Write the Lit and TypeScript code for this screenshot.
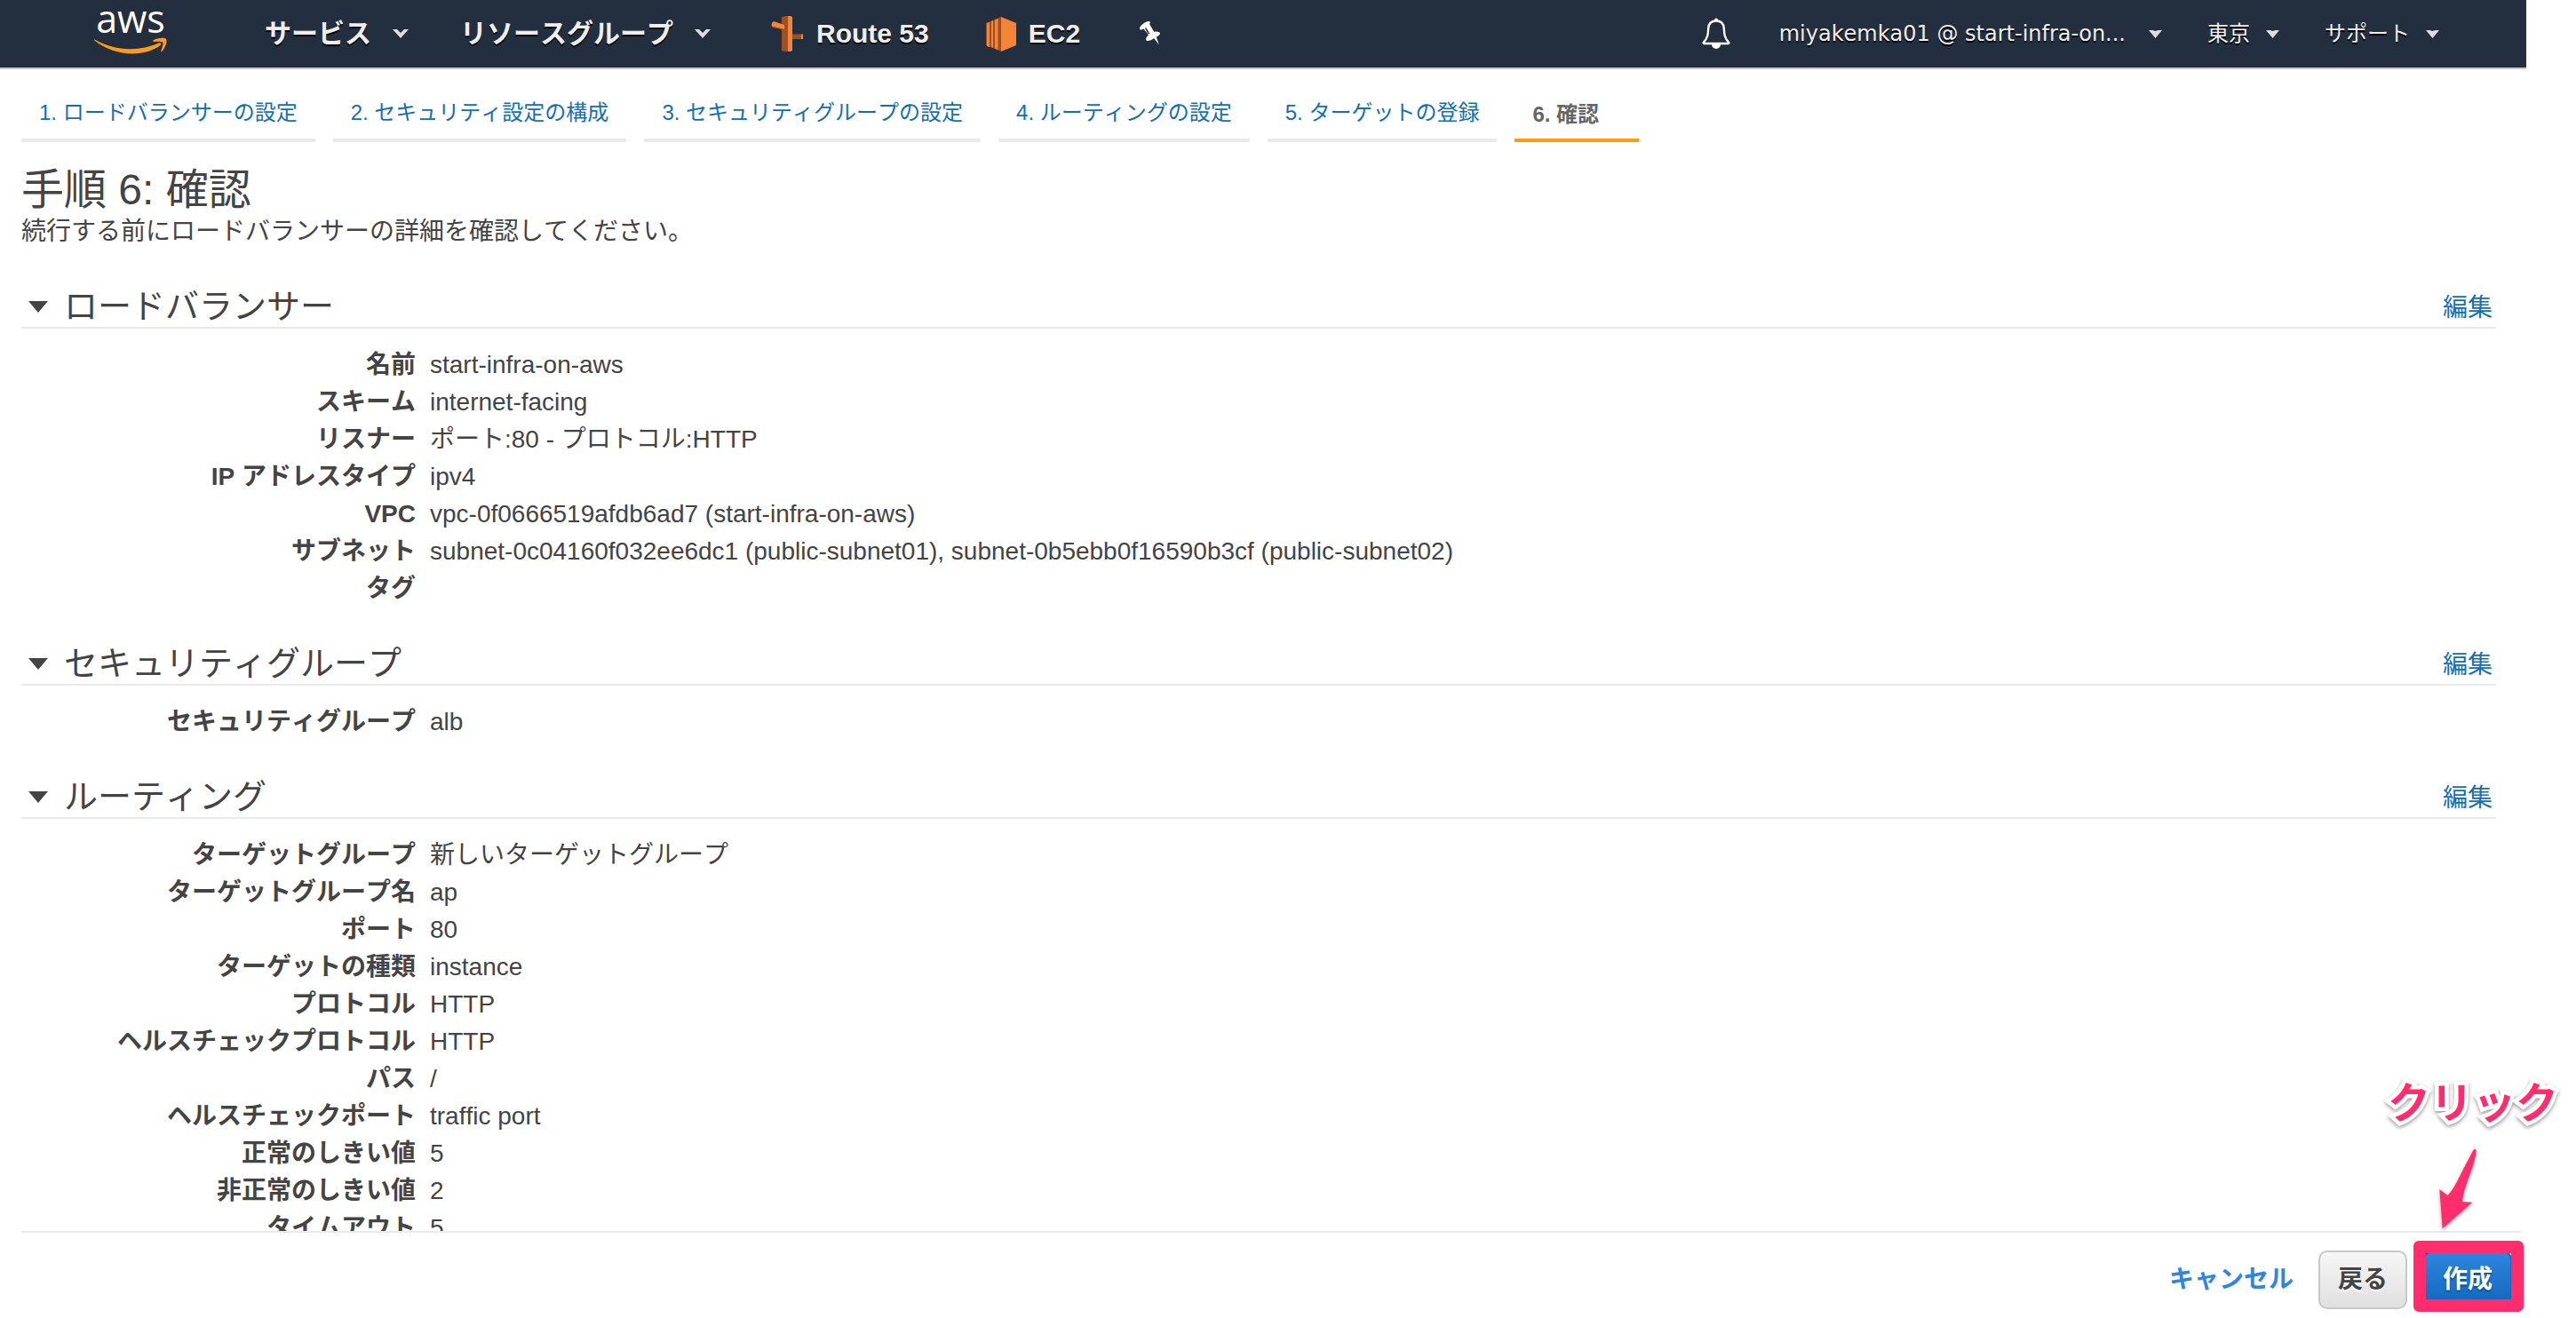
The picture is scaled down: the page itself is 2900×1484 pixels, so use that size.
import { LitElement, html, css, svg, nothing } from "lit";
import { customElement, property, state } from "lit/decorators.js";
import { classMap } from "lit/directives/class-map.js";

type Entry = [label: string, value: string];

interface Section {
  title: string;
  entries: Entry[];
}

const STEPS = [
  "1. ロードバランサーの設定",
  "2. セキュリティ設定の構成",
  "3. セキュリティグループの設定",
  "4. ルーティングの設定",
  "5. ターゲットの登録",
  "6. 確認",
];

const SECTIONS: Section[] = [
  {
    title: "ロードバランサー",
    entries: [
      ["名前", "start-infra-on-aws"],
      ["スキーム", "internet-facing"],
      ["リスナー", "ポート:80 - プロトコル:HTTP"],
      ["IP アドレスタイプ", "ipv4"],
      ["VPC", "vpc-0f0666519afdb6ad7 (start-infra-on-aws)"],
      [
        "サブネット",
        "subnet-0c04160f032ee6dc1 (public-subnet01), subnet-0b5ebb0f16590b3cf (public-subnet02)",
      ],
      ["タグ", ""],
    ],
  },
  {
    title: "セキュリティグループ",
    entries: [["セキュリティグループ", "alb"]],
  },
  {
    title: "ルーティング",
    entries: [
      ["ターゲットグループ", "新しいターゲットグループ"],
      ["ターゲットグループ名", "ap"],
      ["ポート", "80"],
      ["ターゲットの種類", "instance"],
      ["プロトコル", "HTTP"],
      ["ヘルスチェックプロトコル", "HTTP"],
      ["パス", "/"],
      ["ヘルスチェックポート", "traffic port"],
      ["正常のしきい値", "5"],
      ["非正常のしきい値", "2"],
      ["タイムアウト", "5"],
    ],
  },
];

@customElement("console-nav")
export class ConsoleNav extends LitElement {
  static styles = css`
    :host {
      display: block;
      background: #232f3e;
      border-bottom: 2px solid #c8c9cc;
      color: #eee;
    }
    .bar {
      display: flex;
      align-items: center;
      justify-content: space-between;
      height: 76px;
      padding: 0 98px 0 106px;
      white-space: nowrap;
    }
    .group {
      display: flex;
      align-items: center;
    }
    .menus {
      gap: 58px;
      margin-left: 110px;
    }
    .shortcuts {
      gap: 64px;
      margin-left: 68px;
    }
    .account {
      gap: 51px;
    }
    .item {
      display: flex;
      align-items: center;
      gap: 24px;
      padding: 0;
      border: 0;
      background: none;
      color: inherit;
      font: 700 30px/40px "Liberation Sans", "Noto Sans CJK JP", sans-serif;
      font-kerning: none;
      text-shadow: 0 2px 0 #000;
      text-decoration: none;
    }
    .shortcut {
      gap: 14px;
    }
    .small {
      gap: 18px;
      font: 400 24px/40px "DejaVu Sans", "Noto Sans CJK JP", sans-serif;
      font-kerning: none;
    }
    .user {
      padding: 0 8px 0 4px;
    }
    svg {
      display: block;
      flex: none;
      overflow: visible;
    }
    .wordmark {
      font: 500 43px "Open Sans", sans-serif;
      text-shadow: none;
      text-anchor: middle;
    }
  `;

  private caret() {
    return html`<svg width="18" height="10" viewBox="0 0 18 10" aria-hidden="true">
      <path d="M0 0h5l4 4 4-4h5L9 10z" fill="#ddd" />
    </svg>`;
  }

  private smallCaret() {
    return html`<svg width="15" height="9" viewBox="0 0 15 9" aria-hidden="true">
      <path d="M0 0h4.500l3 1 3-1H15L7.500 9z" fill="#ddd" />
    </svg>`;
  }

  render() {
    return html`
      <header class="bar">
        <div class="group">
          <a class="item" href="#home" aria-label="aws">
            <svg width="82" height="52" viewBox="0 0 82 52">
              <text class="wordmark" x="41" y="25" fill="#fff">aws</text>
              <path
                d="M0.500 32.500C24 46 51 46 73 36.500c1.800-.7 3.200 1.200 1.500 2.600C55 53.500 22 51 .3 33.500c-.6-.6-.3-1.300.2-1z"
                fill="#ff9b1a"
              />
              <path
                d="M66.500 33.500c4.500-3.500 13-3.300 14.500-1.800 1.500 1.800-.5 10.300-4.800 14.200-.7.600-1.400.300-1.100-.5 1-2.500 3.200-8.200 2.200-9.700-1-1.400-6.800-.9-9.900-.6-1 .1-1.400-.9-.9-1.600z"
                fill="#ff9b1a"
              />
            </svg>
          </a>
          <nav class="group menus">
            <button class="item" type="button">サービス ${this.caret()}</button>
            <button class="item" type="button">リソースグループ ${this.caret()}</button>
          </nav>
          <div class="group shortcuts">
            <a class="item shortcut" href="#route53">
              <svg width="37" height="40" viewBox="0 0 37 40" aria-hidden="true">
                <path d="M12 1l5-1h3v40h-4l-4-1z" fill="#9d5025" />
                <path d="M19 0h3l2 1v38l-2 1h-3z" fill="#f58536" />
                <path d="M3 6l12 4v5L1 12c-1-3 0-5 2-6z" fill="#f58536" />
                <path d="M1 11.500l14 3.500v1L2 13z" fill="#9d5025" />
                <path d="M24 20.500h12v5.500H24z" fill="#9d5025" />
                <path d="M34 20.500h2v5.500h-2z" fill="#f58536" />
              </svg>
              Route 53
            </a>
            <a class="item shortcut" href="#ec2">
              <svg width="34" height="39" viewBox="0 0 34 39" aria-hidden="true">
                <path d="M0 7L17 0v39L0 32z" fill="#9d5025" />
                <path d="M17 0l17 7v25l-17 7z" fill="#f58536" />
                <path d="M1 7l3-1v28l-3-1zM6 5l2-.7v30.400L6 34zM10 3.500l3.500-1.500v35L10 35.500z" fill="#f58536" />
              </svg>
              EC2
            </a>
            <button class="item" type="button" aria-label="ピン">
              <svg width="28" height="30" viewBox="0 0 28 30" aria-hidden="true">
                <path
                  d="M3 9.500C2.500 6 10 .8 13.500 1c1.500 0 1.800 1.800.5 3l5.200 8.800c3.500-1 7 0 6.800 2-.2 1.500-2 2.700-4.200 4l3 8.700-5.500-7.200c-3 1.700-7 3.500-8.500 2.500-1.600-1.200 0-4.500 2.200-6.500L7.500 9.500C5.500 10.600 3.200 11 3 9.500z"
                  fill="#fff"
                />
                <path d="M9.500 8.500l4 6.500" stroke="#232f3e" stroke-width="1.500" />
              </svg>
            </button>
          </div>
        </div>
        <div class="group account">
          <button class="item" type="button" aria-label="通知">
            <svg width="32" height="36" viewBox="0 0 32 36" aria-hidden="true">
              <path
                d="M16 3.500c-5.500 0-8.500 3.500-8.800 8.500-.3 7-.7 10.500-5.200 15.500-.7.900-.3 1.500.7 1.500h26.600c1 0 1.400-.6.700-1.500-4.500-5-4.900-8.500-5.200-15.500-.3-5-3.300-8.500-8.800-8.500z"
                fill="none"
                stroke="#fff"
                stroke-width="2.400"
              />
              <path d="M14 4V2.500a2 2 0 0 1 4 0V4zM11 30h10a5 5 0 0 1-10 0z" fill="#fff" />
            </svg>
          </button>
          <button class="item small" type="button">
            <span class="user">miyakemka01 @ start-infra-on...</span>${this.smallCaret()}
          </button>
          <button class="item small" type="button">東京 ${this.smallCaret()}</button>
          <button class="item small" type="button">サポート ${this.smallCaret()}</button>
        </div>
      </header>
    `;
  }
}

@customElement("review-section")
export class ReviewSection extends LitElement {
  @property({ attribute: false }) section!: Section;
  @state() private open = true;

  static styles = css`
    :host {
      display: block;
    }
    .head {
      display: flex;
      align-items: center;
      height: 46px;
      padding: 0 4px 0 8px;
      border-bottom: 2px solid #eaeaea;
    }
    .toggle {
      display: flex;
      padding: 0;
      border: 0;
      background: none;
    }
    .closed {
      transform: rotate(-90deg);
    }
    .title {
      flex: 1;
      margin: 0 0 0 18px;
      font-size: 38px;
      font-weight: 400;
      line-height: 46px;
    }
    .edit {
      align-self: flex-end;
      color: #146eb4;
      font-size: 28px;
      line-height: 42px;
      text-decoration: none;
    }
    .list {
      display: grid;
      grid-template-columns: 444px 1fr;
      column-gap: 16px;
      grid-auto-rows: minmax(42px, auto);
      margin: 20px 0 0;
      font-size: 28px;
      line-height: 42px;
    }
    .label {
      font-weight: 700;
      text-align: right;
    }
    .value {
      margin: 0;
    }
  `;

  render() {
    const { title, entries } = this.section;
    return html`
      <section>
        <div class="head">
          <button
            class="toggle"
            type="button"
            aria-label=${title}
            aria-expanded=${this.open}
            @click=${() => (this.open = !this.open)}
          >
            <svg class=${classMap({ closed: !this.open })} width="22" height="13" viewBox="0 0 22 13">
              <path d="M0 0h22L11 13z" fill="#444" />
            </svg>
          </button>
          <h2 class="title">${title}</h2>
          <a class="edit" href="#edit">編集</a>
        </div>
        ${this.open
          ? html`<dl class="list">
              ${entries.map(
                ([label, value]) => html`<dt class="label">${label}</dt>
                  <dd class="value">${value}</dd>`
              )}
            </dl>`
          : nothing}
      </section>
    `;
  }
}

@customElement("app-root")
export class AppRoot extends LitElement {
  static styles = css`
    :host {
      display: flex;
      flex-direction: column;
      box-sizing: border-box;
      height: 100vh;
      overflow: hidden;
      background: #fff;
      color: #444;
      font-family: "Liberation Sans", "Noto Sans CJK JP", sans-serif;
      font-kerning: none;
    }
    .nav {
      flex: none;
      margin-right: 56px;
    }
    .content {
      flex: 1;
      min-height: 0;
      overflow: hidden;
      padding: 0 90px 0 24px;
    }
    .steps {
      display: flex;
      gap: 20px;
      margin: 0;
      padding: 0;
      list-style: none;
      font-size: 24px;
      line-height: 30px;
    }
    .step {
      box-sizing: border-box;
      padding: 34px 20px 14px;
      border-bottom: 4px solid #eaeaea;
    }
    .current {
      min-width: 140px;
      padding: 36px 20px 12px;
      border-color: #ff9913;
      color: #666;
      font-weight: 700;
    }
    .link {
      color: #146eb4;
      text-decoration: none;
    }
    .heading {
      margin: 26px 0 0;
      font-size: 48px;
      font-weight: 400;
      line-height: 56px;
    }
    .lead {
      margin: 0 0 42px;
      font-size: 28px;
      line-height: 38px;
    }
    .sections {
      display: flex;
      flex-direction: column;
      gap: 40px;
    }
    .footer {
      flex: none;
      display: flex;
      align-items: center;
      justify-content: flex-end;
      margin: 0 62px 0 24px;
      padding: 20px 10px 10px 0;
      border-top: 2px solid #eaeaea;
    }
    .button {
      box-sizing: border-box;
      width: 100px;
      height: 66px;
      padding: 0;
      border: 2px solid #c8c8c8;
      border-radius: 10px;
      font: 700 28px/38px "Liberation Sans", "Noto Sans CJK JP", sans-serif;
      font-kerning: none;
    }
    .cancel {
      width: auto;
      margin-right: 28px;
      border: 0;
      background: none;
      color: #2e86de;
    }
    .back {
      margin-right: 18px;
      background: linear-gradient(#f6f6f6, #e0e0e0);
      color: #444;
      text-shadow: 0 2px 0 #fff;
    }
    .create {
      border-color: #1166bb;
      background: linear-gradient(#2e86de, #1166bb);
      color: #fff;
      text-shadow: 0 2px 2px #0a4a8c;
    }
    .target {
      position: relative;
      display: flex;
    }
    .frame {
      position: absolute;
      inset: -11px -13px -3px -11px;
      border: 14px solid #ff2d6d;
      border-radius: 6px;
      pointer-events: none;
    }
    .callout {
      position: absolute;
      right: -52px;
      bottom: 201px;
      color: #ff2d6d;
      font-size: 48px;
      font-weight: 700;
      line-height: 60px;
      white-space: nowrap;
      -webkit-text-stroke: 9px #fff;
      paint-order: stroke fill;
      filter: drop-shadow(0 2px 2px #0006);
    }
    .arrow {
      position: absolute;
      left: 15px;
      bottom: 86px;
      filter: drop-shadow(0 2px 2px #0005);
    }
  `;

  private renderArrow() {
    return svg`<path
      d="M124 12c2-5 10-4 10 2-3 24-9 47-18 70-12 33-25 66-29 102l34 2-101 89-10-133 28 21c20-22 32-48 45-74z"
      fill="#ff2d6d"
    />`;
  }

  render() {
    const last = STEPS.length - 1;
    return html`
      <console-nav class="nav"></console-nav>
      <main class="content">
        <ol class="steps">
          ${STEPS.map((step, i) =>
            i === last
              ? html`<li class="step current" aria-current="step">${step}</li>`
              : html`<li class="step"><a class="link" href="#step${i + 1}">${step}</a></li>`
          )}
        </ol>
        <h1 class="heading">手順 6: 確認</h1>
        <p class="lead">続行する前にロードバランサーの詳細を確認してください。</p>
        <div class="sections">
          ${SECTIONS.map((s) => html`<review-section .section=${s}></review-section>`)}
        </div>
      </main>
      <footer class="footer">
        <button class="button cancel" type="button">キャンセル</button>
        <button class="button back" type="button">戻る</button>
        <div class="target">
          <button class="button create" type="button">作成</button>
          <div class="frame"></div>
          <svg class="arrow" width="48" height="97" viewBox="0 0 144 291" aria-hidden="true">
            ${this.renderArrow()}
          </svg>
          <div class="callout">クリック</div>
        </div>
      </footer>
    `;
  }
}
